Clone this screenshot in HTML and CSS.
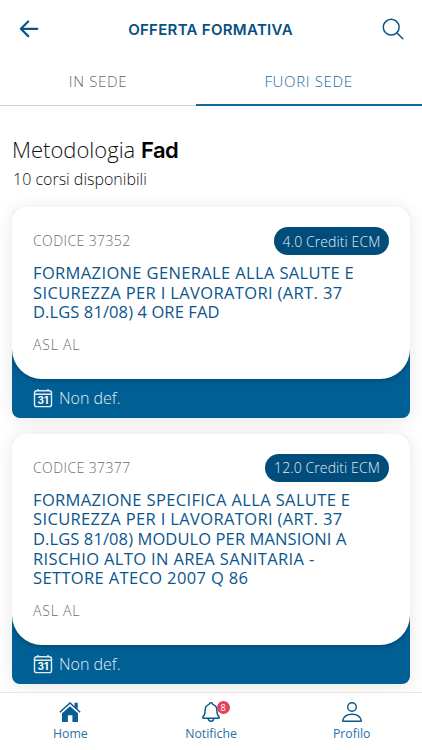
FILE: index.html
```html
<!DOCTYPE html>
<html lang="it">
<head>
<meta charset="utf-8">
<title>Offerta formativa</title>
<link rel="stylesheet" href="styles.css">
</head>
<body>
<div class="app">
  <header class="topbar">
    <svg class="back" viewBox="0 0 20 20"><path d="M18.3 9.8H2.2M9.2 2.5L1.9 9.8l7.3 7.3"/></svg>
    <h1>OFFERTA FORMATIVA</h1>
    <svg class="search" viewBox="0 0 22 22"><circle cx="9.2" cy="9.2" r="7.9"/><path d="M15 15l5.8 5.8"/></svg>
  </header>
  <nav class="tabs">
    <div class="tab"><span>IN SEDE</span></div>
    <div class="tab active"><span>FUORI SEDE</span></div>
  </nav>
  <main class="content">
    <h2><span class="method">Metodologia</span> <b>Fad</b></h2>
    <p class="count">10 corsi disponibili</p>
    <article class="card">
      <div class="body">
        <div class="row"><span class="code">CODICE 37352</span><span class="pill short"><span>4.0 Crediti ECM</span></span></div>
        <h3>FORMAZIONE GENERALE ALLA SALUTE E<br>SICUREZZA PER I LAVORATORI (ART. 37<br><span class="tight">D.LGS 81/08) 4 ORE FAD</span></h3>
        <p class="org">ASL AL</p>
      </div>
      <footer class="date">
        <svg viewBox="0 0 20 20"><rect x="1.5" y="2.8" width="17" height="15.8" rx="2.2"/><path d="M1.5 6.3h17M5 .9v2M15 .9v2"/><text x="10" y="16">31</text></svg>
        <span>Non def.</span>
      </footer>
    </article>
    <article class="card">
      <div class="body">
        <div class="row"><span class="code">CODICE 37377</span><span class="pill long"><span>12.0 Crediti ECM</span></span></div>
        <h3>FORMAZIONE SPECIFICA ALLA SALUTE E<br>SICUREZZA PER I LAVORATORI (ART. 37<br><span class="tight">D.LGS 81/08) MODULO PER MANSIONI A</span><br>RISCHIO ALTO IN AREA SANITARIA -<br>SETTORE ATECO 2007 Q 86</h3>
        <p class="org">ASL AL</p>
      </div>
      <footer class="date">
        <svg viewBox="0 0 20 20"><rect x="1.5" y="2.8" width="17" height="15.8" rx="2.2"/><path d="M1.5 6.3h17M5 .9v2M15 .9v2"/><text x="10" y="16">31</text></svg>
        <span>Non def.</span>
      </footer>
    </article>
  </main>
  <nav class="bottom">
    <div class="item">
      <svg class="home" viewBox="0 0 22 22"><path class="solid" d="M3 12.300l8-7 8 7V21h-5.600v-6.800H8.900V21H3zM15.500 1.800h3.200v6.500l-3.200-2.800z"/><path d="M.8 11.300L11 2l10.200 9.300"/></svg>
      <span>Home</span>
    </div>
    <div class="item">
      <svg class="bell" viewBox="0 0 22 22"><path d="M9.3 3.400a1.700 1.700 0 0 1 3.400 0c3 .8 4.200 3.300 4.200 6.200 0 3.600.8 5.200 2.200 6.300.5.500.2 1.300-.6 1.300h-15c-.8 0-1.100-.8-.6-1.300 1.400-1.100 2.200-2.700 2.200-6.300 0-2.900 1.200-5.400 4.200-6.200M8.300 17.500a2.700 2.700 0 0 0 5.400 0"/></svg>
      <i class="badge">8</i>
      <span>Notifiche</span>
    </div>
    <div class="item">
      <svg class="user" viewBox="0 0 22 22"><circle cx="11" cy="6" r="4.300"/><path d="M2.200 20.300c-.5 0-.6-.4-.5-.9.900-3.800 4.400-6.200 9.300-6.200s8.400 2.400 9.300 6.200c.1.500 0 .9-.5.9z"/></svg>
      <span>Profilo</span>
    </div>
  </nav>
</div>
</body>
</html>
```
FILE: styles.css
```css
* { box-sizing: border-box; margin: 0; padding: 0; }
body { background: #fff; overflow: hidden; font-family: "Open Sans", "Noto Sans", sans-serif; font-weight: 300; white-space: nowrap; }
svg { fill: none; stroke: #075687; display: block; }
.app { width: 422px; height: 750px; display: flex; flex-direction: column; }
.topbar { height: 58px; flex: none; display: flex; align-items: center; justify-content: space-between; padding: 0 18px 0 19px; }
.back { width: 20px; height: 20px; stroke-width: 2.2; stroke-linecap: round; stroke-linejoin: round; }
.search { width: 22px; height: 22px; stroke-width: 1.5; stroke-linecap: round; }
h1 { font: 600 15px Inter, sans-serif; letter-spacing: .3px; color: #075083; }
.tabs { height: 48px; flex: none; display: flex; border-bottom: 1px solid #cfcfcf; }
.tab { width: 196px; display: flex; align-items: center; justify-content: center; font-size: 15px; letter-spacing: .65px; color: #666; padding-bottom: 2px; }
.tab.active { width: 226px; border-bottom: 2px solid #12699a; margin-bottom: -1px; padding-bottom: 1px; color: #1b699f; }
.tab.active span { margin-right: 1px; }
.content { flex: 1; min-height: 0; overflow: hidden; padding: 27px 12px 0; }
h2 { font-size: 22px; line-height: 32px; font-weight: 300; color: #111; padding-left: 0; }
h2 b { font-family: Inter, sans-serif; font-weight: 600; letter-spacing: -.6px; color: #000; }
.count { font-size: 16px; line-height: 24px; color: #111; padding-left: 1px; margin: 1px 0 16px; }
.card { background: linear-gradient(#fff 50%, #005f94 50%); border-radius: 14px 14px 8px 8px; box-shadow: 0 2px 18px rgba(0,0,0,.1); margin-bottom: 16px; width: 398px; }
.body { background: #fff; border-radius: 14px 14px 30px 30px; padding: 20px 21px 24px; box-shadow: 0 2px 4px rgba(0,0,0,.2); clip-path: inset(0 0 -8px); }
.row { display: flex; justify-content: space-between; height: 28px; align-items: center; }
.code { font-size: 14px; line-height: 20px; letter-spacing: .4px; color: #6b6b6b; }
.pill { height: 28px; border-radius: 14px; background: #004c7a; color: #e4edf3; font-size: 14px; letter-spacing: .1px; display: flex; align-items: center; justify-content: center; }
.short { width: 115px; }
.long { width: 124px; }
h3 { color: #0a568d; font-size: 16.500px; line-height: 19.600px; font-weight: 500; letter-spacing: .36px; margin-top: 8px; }
.tight { letter-spacing: .1px; }
.org { font-size: 14px; line-height: 20px; letter-spacing: .8px; color: #6b6b6b; margin-top: 13px; }
.date { height: 39px; display: flex; align-items: center; gap: 6px; padding-left: 21px; color: #e4edf3; font-size: 16px; }
.date svg { width: 20px; height: 20px; stroke: #e4edf3; stroke-width: 1.400; }
.date text { fill: #fff; stroke: none; font: 700 10px Inter, sans-serif; text-anchor: middle; }
.bottom { height: 58px; flex: none; display: flex; border-top: 1px solid #e6e6e6; background: #fff; }
.item { width: 140.700px; display: flex; flex-direction: column; align-items: center; padding-top: 8px; color: #2672a5; font-size: 12.300px; font-weight: 400; position: relative; }
.item svg { width: 22px; height: 22px; stroke-width: 1.400; }
.item span { line-height: 18px; margin-top: 2px; }
.home .solid { fill: #075f96; stroke: none; }
.badge { position: absolute; left: 76px; top: 8px; width: 13px; height: 13px; border-radius: 50%; background: #e63f5a; color: #fff; font-size: 9px; line-height: 13px; font-style: normal; text-align: center; }
```
